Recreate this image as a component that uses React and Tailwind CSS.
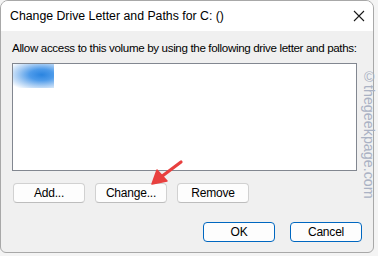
import React from 'react';

function Button({ children, primary }) {
    return (
        <button
            className={`w-[72px] h-[20px] rounded-[4px] text-[12px] leading-none text-black bg-[#fdfdfd] tracking-[-0.2px] ${primary ? 'border border-[#0067c0]' : 'border border-[#d1d1d1] border-b-[#bdbdbd]'}`}
        >
            {children}
        </button>
    );
}

export default function App() {
    return (
        <div className="relative w-[378px] h-[256px] overflow-hidden bg-[#f4f4f4] font-['Liberation_Sans',Arial,sans-serif]">
            <div className="w-[374px] h-[253px] rounded-t-lg rounded-b-md border border-[#a8a8a8] bg-[#f0f0f0] overflow-hidden flex flex-col">
                {/* Title bar */}
                <div className="h-[30px] shrink-0 bg-white flex items-center justify-between pl-[9px] pr-[7px]">
                    <span className="text-[12.3px] text-black pt-[1px] whitespace-nowrap">Change Drive Letter and Paths for C: ()</span>
                    <svg width="12" height="12" viewBox="0 0 12 12" className="mr-[1px]">
                        <path d="M1 1 L11 11 M11 1 L1 11" stroke="#1a1a1a" strokeWidth="1.1" />
                    </svg>
                </div>

                <div className="flex flex-col pl-[11px] pt-[10px]">
                    <p className="text-[11.6px] leading-[14px] tracking-[-0.35px] text-black whitespace-nowrap">
                        Allow access to this volume by using the following drive letter and paths:
                    </p>

                    {/* Path list */}
                    <div className="mt-[8px] w-[345px] h-[108px] border border-[#828790] bg-white">
                        <div className="w-[41px] h-[24px] bg-[radial-gradient(ellipse_at_70%_45%,#2a84e0_0%,#4e9bea_30%,#a9cdf3_60%,#ffffff_92%)]" />
                    </div>

                    <div className="flex gap-[10px] mt-[12px] pl-[1px]">
                        <Button>Add...</Button>
                        <Button>Change...</Button>
                        <Button>Remove</Button>
                    </div>

                    <div className="flex gap-[15px] mt-[19px] pl-[191px]">
                        <Button primary>OK</Button>
                        <Button primary>Cancel</Button>
                    </div>
                </div>
            </div>

            {/* Annotation arrow */}
            <svg className="absolute left-0 top-0" width="378" height="256" viewBox="0 0 378 256">
                <path d="M181 162 L161 177" stroke="#e8403f" strokeWidth="3.2" strokeLinecap="round" />
                <path d="M152 184 L157 170 L167 181 Z" fill="#e8403f" stroke="#e8403f" strokeWidth="1.5" strokeLinejoin="round" />
            </svg>

            {/* Watermark */}
            <span className="absolute left-[362px] top-[69px] text-[14.3px] leading-none text-[#aab2c4] [writing-mode:vertical-rl]">
                ©thegeekpage.com
            </span>
        </div>
    );
}
